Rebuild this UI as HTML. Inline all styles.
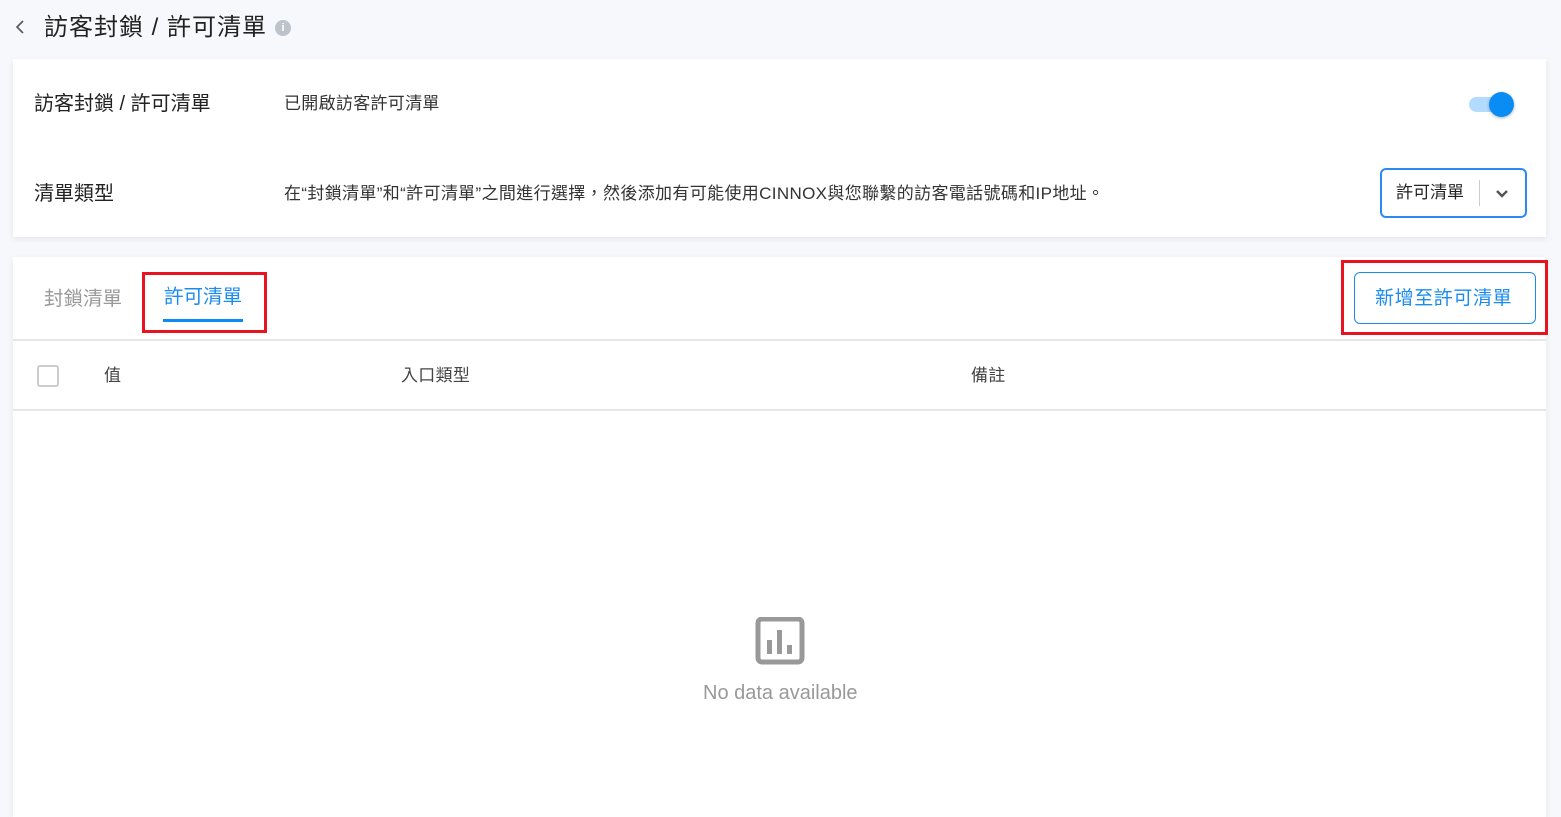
<!DOCTYPE html>
<html><head><meta charset="utf-8"><style>
*{box-sizing:border-box;margin:0;padding:0}
body{width:1561px;height:807px;overflow:hidden;background:#f7f8fc;font-family:"Liberation Sans","Noto Sans CJK TC",sans-serif;color:#222;position:relative}
.abs{position:absolute;white-space:nowrap;line-height:1.3}
.card{position:absolute;background:#fff;box-shadow:0 2px 6px rgba(0,0,0,.08)}
</style></head><body>
<svg class="abs" style="left:14px;top:19px" width="12" height="16" viewBox="0 0 12 16"><path d="M9 2 L3 8 L9 14" fill="none" stroke="#555" stroke-width="1.6"/></svg>
<div class="abs" style="left:44px;top:12px;font-size:24px;letter-spacing:1px;color:#222">訪客封鎖 / 許可清單</div>
<div class="abs" style="left:275px;top:20px;width:16px;height:16px;border-radius:50%;background:#bcc3cb;color:#fff;font-size:11px;font-weight:bold;text-align:center;line-height:16px">i</div>

<div class="card" style="left:13px;top:59px;width:1533px;height:178px"></div>
<div class="abs" style="left:34px;top:91px;font-size:20px">訪客封鎖 / 許可清單</div>
<div class="abs" style="left:284px;top:93px;font-size:17px;letter-spacing:.3px;color:#333">已開啟訪客許可清單</div>
<div class="abs" style="left:1469px;top:97px;width:36px;height:15px;border-radius:8px;background:#b3dbff"></div>
<div class="abs" style="left:1489px;top:92px;width:25px;height:25px;border-radius:50%;background:#0a8cf5;box-shadow:0 1px 3px rgba(0,0,0,.3)"></div>
<div class="abs" style="left:34px;top:181px;font-size:20px">清單類型</div>
<div class="abs" style="left:284px;top:183px;font-size:17px;letter-spacing:.35px;color:#333">在“封鎖清單”和“許可清單”之間進行選擇，然後添加有可能使用CINNOX與您聯繫的訪客電話號碼和IP地址。</div>
<div class="abs" style="left:1380px;top:168px;width:147px;height:50px;border:2px solid #2b8af0;border-radius:6px"></div>
<div class="abs" style="left:1396px;top:182px;font-size:17px">許可清單</div>
<div class="abs" style="left:1479px;top:180px;width:1px;height:26px;background:#ccc"></div>
<svg class="abs" style="left:1495px;top:189px" width="14" height="10" viewBox="0 0 14 10"><path d="M2 2 L7 7 L12 2" fill="none" stroke="#555" stroke-width="2.4"/></svg>

<div class="card" style="left:13px;top:257px;width:1533px;height:560px"></div>
<div class="abs" style="left:44px;top:287px;font-size:19.5px;color:#999">封鎖清單</div>
<div class="abs" style="left:164px;top:285px;font-size:19.5px;color:#1a8cf0">許可清單</div>
<div class="abs" style="left:163px;top:319px;width:80px;height:3px;background:#0a8cf5"></div>
<div class="abs" style="left:142px;top:272px;width:125px;height:61px;border:3px solid #e8131f"></div>
<div class="abs" style="left:1354px;top:272px;width:182px;height:52px;border:1px solid #1a8cf0;border-radius:6px"></div>
<div class="abs" style="left:1375px;top:287px;font-size:19px;color:#1a8cf0;letter-spacing:.6px">新增至許可清單</div>
<div class="abs" style="left:1341px;top:260px;width:207px;height:75px;border:3px solid #e8131f"></div>
<div class="abs" style="left:13px;top:339px;width:1533px;height:2px;background:#e6e6e6"></div>
<div class="abs" style="left:37px;top:365px;width:22px;height:22px;border:2px solid #ccc;border-radius:3px"></div>
<div class="abs" style="left:104px;top:365px;font-size:17px;letter-spacing:.3px;color:#444">值</div>
<div class="abs" style="left:401px;top:365px;font-size:17px;letter-spacing:.3px;color:#444">入口類型</div>
<div class="abs" style="left:971px;top:365px;font-size:17px;letter-spacing:.3px;color:#444">備註</div>
<div class="abs" style="left:13px;top:409px;width:1533px;height:2px;background:#e6e6e6"></div>
<svg class="abs" style="left:755px;top:617px" width="50" height="48" viewBox="0 0 50 48"><rect x="3" y="2" width="44" height="43" rx="4" fill="none" stroke="#999" stroke-width="5"/><rect x="12" y="23" width="5" height="14" fill="#999"/><rect x="22" y="13" width="5" height="24" fill="#999"/><rect x="32" y="28" width="5" height="9" fill="#999"/></svg>
<div class="abs" style="left:703px;top:680px;font-size:20px;color:#999">No data available</div>
</body></html>
